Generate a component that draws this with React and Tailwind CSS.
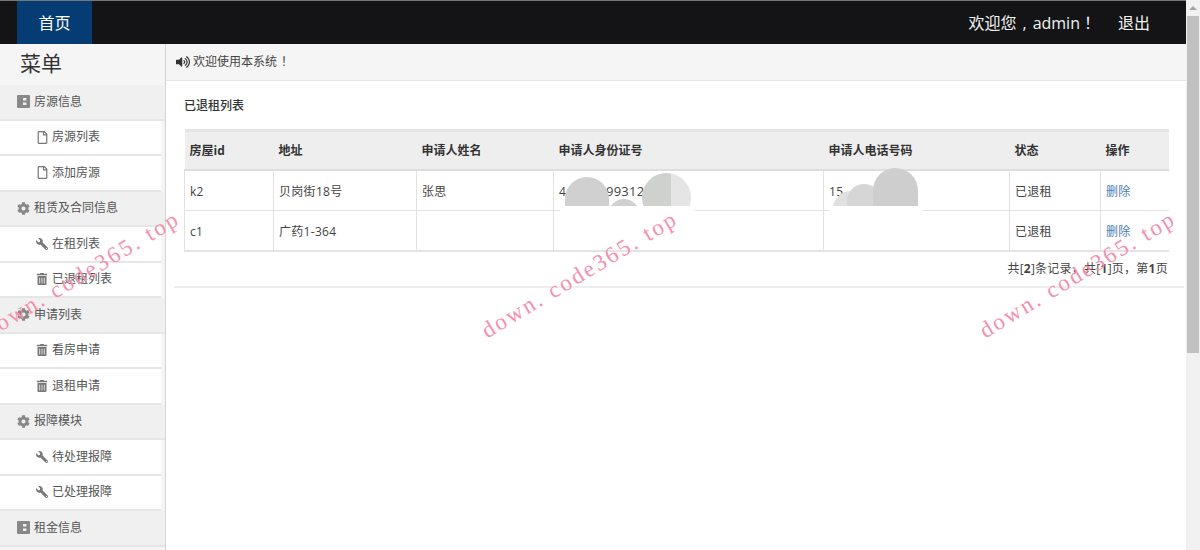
import React from 'react';
import { FaCog, FaWrench, FaTrashAlt, FaRegFile, FaVolumeUp } from 'react-icons/fa';

function BookIcon() {
  return (
    <svg width="13" height="13" viewBox="0 0 13 13" className="shrink-0">
      <path fill="#888" d="M1 0h11a1 1 0 0 1 1 1v11a1 1 0 0 1-1 1H1a1 1 0 0 1-1-1V1a1 1 0 0 1 1-1zM6 3v2.6h3.4V3zM6 7.4V10h3.4V7.4z" fillRule="evenodd" />
    </svg>
  );
}

function Section({ icon, label }) {
  return (
    <div className="h-[35.5px] flex items-center pl-[17px] bg-[#f0f0f0] border-b-2 border-[#e6e6e6] text-[12px] text-[#555]">
      <span className="w-[17px] flex items-center">{icon}</span>
      {label}
    </div>
  );
}

function Item({ icon, label }) {
  return (
    <div className="h-[35.5px] flex items-center pl-[36px] mr-[4px] bg-white border-b-2 border-[#e6e6e6] text-[12px] text-[#555]">
      <span className="w-[16px] flex items-center text-[#777]">{icon}</span>
      {label}
    </div>
  );
}

const gear = <FaCog size={13} color="#888" />;
const wrench = <FaWrench size={12} className="-scale-x-100" />;
const trash = <FaTrashAlt size={12} />;
const file = <FaRegFile size={13} />;

function Sidebar() {
  return (
    <aside className="w-[166px] shrink-0 bg-[#f5f5f5] border-r border-[#d4d4d4] overflow-hidden">
      <div className="h-[41px] pl-[20px] pt-[5px] text-[21px] leading-[28px] text-[#333]">菜单</div>
      <Section icon={<BookIcon />} label="房源信息" />
      <Item icon={file} label="房源列表" />
      <Item icon={file} label="添加房源" />
      <Section icon={gear} label="租赁及合同信息" />
      <Item icon={wrench} label="在租列表" />
      <Item icon={trash} label="已退租列表" />
      <Section icon={gear} label="申请列表" />
      <Item icon={trash} label="看房申请" />
      <Item icon={trash} label="退租申请" />
      <Section icon={gear} label="报障模块" />
      <Item icon={wrench} label="待处理报障" />
      <Item icon={wrench} label="已处理报障" />
      <Section icon={<BookIcon />} label="租金信息" />
    </aside>
  );
}

const headers = ['房屋id', '地址', '申请人姓名', '申请人身份证号', '申请人电话号码', '状态', '操作'];

function Cell({ children }) {
  return <td className="h-[40.5px] pl-[5px] pt-[3px] border-l border-[#e2e2e2] text-[12px] tracking-[0.3px] text-[#444]">{children}</td>;
}

function Table() {
  return (
    <table className="w-[984px] table-fixed border-collapse border-b-2 border-[#e4e4e4]">
      <colgroup>
        <col className="w-[89px]" />
        <col className="w-[143px]" />
        <col className="w-[137px]" />
        <col className="w-[270px]" />
        <col className="w-[186px]" />
        <col className="w-[91px]" />
        <col className="w-[68px]" />
      </colgroup>
      <thead>
        <tr className="h-[39px] bg-[#eeeeee] border-t-[3px] border-b-2 border-t-[#e6e6e6] border-b-[#dddddd]">
          {headers.map((h) => (
            <th key={h} className="pl-[5px] pt-[2px] text-left text-[12px] font-bold text-[#333]">{h}</th>
          ))}
        </tr>
      </thead>
      <tbody>
        <tr className="border-b border-[#e4e4e4]">
          <Cell>k2</Cell>
          <Cell>贝岗街18号</Cell>
          <Cell>张思</Cell>
          <Cell>4<span className="ml-[32px] text-[13px]">199312</span></Cell>
          <Cell>15</Cell>
          <Cell>已退租</Cell>
          <Cell><span className="text-[#4a7db5]">删除</span></Cell>
        </tr>
        <tr>
          <Cell>c1</Cell>
          <Cell>广药1-364</Cell>
          <Cell></Cell>
          <Cell></Cell>
          <Cell></Cell>
          <Cell>已退租</Cell>
          <Cell><span className="text-[#4a7db5]">删除</span></Cell>
        </tr>
      </tbody>
    </table>
  );
}

function Blobs() {
  return (
    <>
      <div className="absolute left-[560px] top-[206px] w-[135px] h-[12px] bg-white" />
      <div className="absolute left-[830px] top-[206px] w-[92px] h-[12px] bg-white" />
      <div className="absolute left-[560px] top-[170px] w-[135px] h-[36px] overflow-hidden">
        <div className="absolute left-[5px] top-[7px] w-[44px] h-[44px] rounded-t-full bg-[#cfd0cf]" />
        <div className="absolute left-[48px] top-[29px] w-[32px] h-[32px] rounded-full bg-[#cfd0cf]" />
        <div className="absolute left-[82px] top-[3px] w-[49px] h-[49px] rounded-full bg-[linear-gradient(90deg,#cfd1cf_59%,#e4e5e4_59%)]" />
      </div>
      <div className="absolute left-[830px] top-[165px] w-[92px] h-[41px] overflow-hidden">
        <div className="absolute left-[3px] top-[26px] w-[36px] h-[36px] rounded-full bg-[#e0e0e0]" />
        <div className="absolute left-[17px] top-[19px] w-[34px] h-[34px] rounded-t-full bg-[#d6d6d6]" />
        <div className="absolute left-[43px] top-[3px] w-[45px] h-[45px] rounded-t-full bg-[#cecece]" />
      </div>
    </>
  );
}

function Watermark({ className }) {
  return (
    <div className={`absolute top-[275px] -translate-x-1/2 -translate-y-1/2 -rotate-[31deg] whitespace-nowrap text-[23px] tracking-[2.4px] text-[#f58fae] font-['Liberation_Serif',serif] pointer-events-none ${className}`}>
      down. code365. top
    </div>
  );
}

function Scrollbar() {
  return (
    <div className="w-[14px] shrink-0 bg-[#f1f1f1] flex flex-col items-center">
      <div className="h-[16px] flex items-center justify-center">
        <div className="w-0 h-0 border-x-[4px] border-x-transparent border-b-[4px] border-b-[#a3a3a3]" />
      </div>
      <div className="w-[12px] h-[337px] bg-[#c1c1c1]" />
    </div>
  );
}

export default function App() {
  return (
    <div className="relative w-[1200px] h-[550px] overflow-hidden flex bg-white font-['Open_Sans','Noto_Sans_CJK_SC',sans-serif]">
      <div className="w-[1186px] flex flex-col">
        <header className="h-[44px] shrink-0 flex items-stretch justify-between bg-[#141416] border-t border-[#777] text-white">
          <div className="ml-[17px] w-[75px] bg-[#063c74] flex items-center justify-center text-[16px]">首页</div>
          <div className="flex items-center pt-[1px] text-[16px] text-[#f2f2f2]">
            <span>欢迎您</span>
            <span className="ml-[6px]">,</span>
            <span className="ml-[6px]">admin</span>
            <span className="ml-[4px]">！</span>
            <span className="ml-[18px] mr-[36px]">退出</span>
          </div>
        </header>
        <div className="flex flex-1 min-h-0">
          <Sidebar />
          <main className="flex-1 min-w-0">
            <div className="h-[37px] flex items-center pl-[10px] gap-[3px] bg-[#f5f5f5] border-b border-[#e6e6e6] text-[12px] text-[#444]">
              <FaVolumeUp size={14} color="#333" />
              <span>欢迎使用本系统<span className="ml-[4px]">！</span></span>
            </div>
            <div className="ml-[8px] mr-[2px] pl-[10px] pr-[16px] pb-[1px] border-b-2 border-[#eeeeee]">
              <div className="h-[48px] pt-[16px] text-[12px] font-medium text-[#333] leading-[17px]">已退租列表</div>
              <Table />
              <div className="h-[33px] pt-[2px] flex items-center justify-end text-[12px] tracking-[0.25px] text-[#444]">
                共[<b>2</b>]条记录，共[<b>1</b>]页，第<b>1</b>页
              </div>
            </div>
          </main>
        </div>
      </div>
      <Scrollbar />
      <Blobs />
      <Watermark className="left-[82px]" />
      <Watermark className="left-[580px]" />
      <Watermark className="left-[1078px]" />
    </div>
  );
}
